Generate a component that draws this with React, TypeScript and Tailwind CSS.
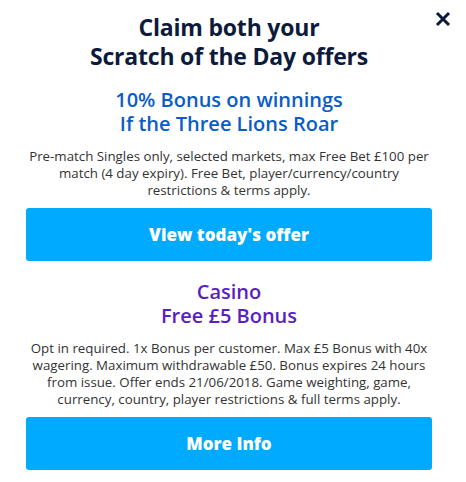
import React from "react";

export default function App() {
  return (
    <div className="w-[466px] h-[482px] bg-white relative overflow-hidden" style={{ fontFamily: '"Open Sans", "Liberation Sans", sans-serif' }}>
      <button className="absolute left-[434px] top-[10px] w-[18px] h-[18px] flex items-center justify-center">
        <svg width="16" height="16" viewBox="0 0 16 16">
          <path d="M2 2 L14 14 M14 2 L2 14" stroke="#0c1a3c" strokeWidth="3" strokeLinecap="butt" />
        </svg>
      </button>
      <div className="flex flex-col items-center pt-[13px] ml-[26px] w-[406px]">
        <h1 className="text-[23px] leading-[29px] font-bold text-[#0c1a3c] text-center tracking-[-0.2px]">
          Claim both your
          <br />
          Scratch of the Day offers
        </h1>
        <h2 className="mt-[17px] text-[20px] leading-[24px] text-[#0b5cc7] text-center font-semibold">
          10% Bonus on winnings
          <br />
          If the Three Lions Roar
        </h2>
        <p className="mt-[12px] text-[13.3px] leading-[17px] text-[#333333] text-center">
          Pre-match Singles only, selected markets, max Free Bet £100 per match (4 day expiry). Free Bet, player/currency/country restrictions &amp; terms apply.
        </p>
        <button className="mt-[9px] w-full h-[53px] rounded-[3px] bg-[#00aaff] text-white font-extrabold text-[17px]">
          View today's offer
        </button>
        <h2 className="mt-[19px] text-[20px] leading-[24px] text-[#5a1fc0] text-center font-semibold">
          Casino
          <br />
          Free £5 Bonus
        </h2>
        <p className="mt-[12px] text-[13.3px] leading-[17px] text-[#333333] text-center">
          Opt in required. 1x Bonus per customer. Max £5 Bonus with 40x wagering. Maximum withdrawable £50. Bonus expires 24 hours from issue. Offer ends 21/06/2018. Game weighting, game, currency, country, player restrictions &amp; full terms apply.
        </p>
        <button className="mt-[9px] w-full h-[53px] rounded-[3px] bg-[#00aaff] text-white font-extrabold text-[17px]">
          More Info
        </button>
      </div>
    </div>
  );
}
